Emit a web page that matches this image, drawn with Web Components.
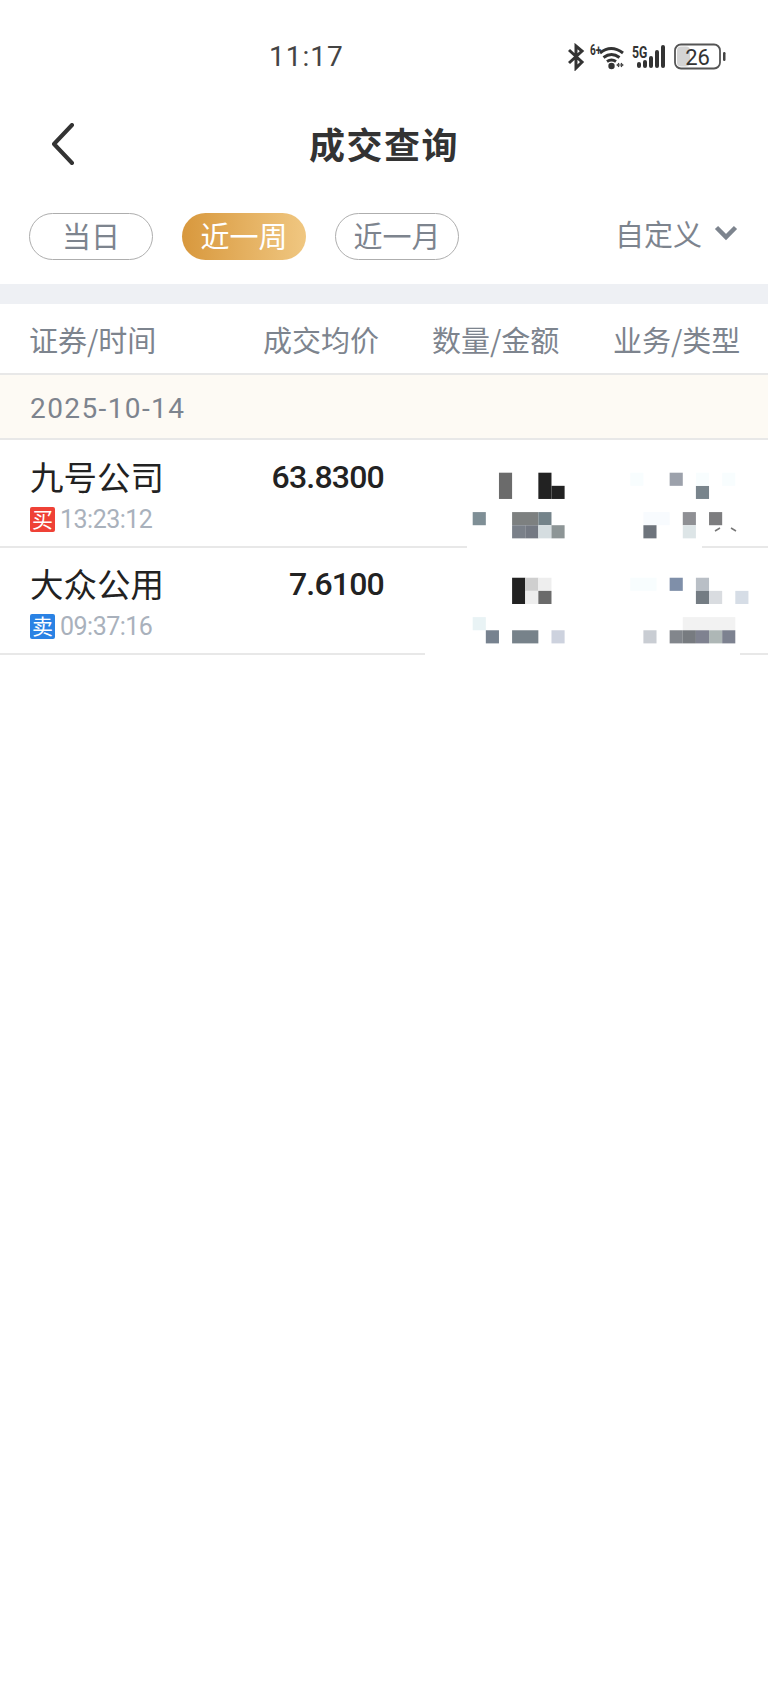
<!DOCTYPE html>
<html lang="zh">
<head>
<meta charset="utf-8">
<title>成交查询</title>
<style>
    html, body { margin: 0; background: #fff; }
    body { width: 768px; height: 1690px; overflow: hidden; font-family: "Noto Sans CJK SC", Roboto, sans-serif; }
</style>
</head>
<body>
<status-bar></status-bar>
<nav-bar>成交查询</nav-bar>
<filter-bar>
    <filter-pill>当日</filter-pill>
    <filter-pill active>近一周</filter-pill>
    <filter-pill>近一月</filter-pill>
</filter-bar>
<trade-table>
    <date-row>2025-10-14</date-row>
    <trade-row name="九号公司" side="买" time="13:23:12" price="63.8300"></trade-row>
    <trade-row name="大众公用" side="卖" time="09:37:16" price="7.6100"></trade-row>
</trade-table>

<script>
    class StatusBar extends HTMLElement {
        constructor() {
            super()
            this.attachShadow({ mode: 'open' }).innerHTML = `
                <style>
                    :host { display: flex; box-sizing: border-box; height: 100px; padding: 41px 40px 0 269px; justify-content: space-between; align-items: flex-start; color: #444; }
                    .time { font: 400 28px/32px Roboto, sans-serif; letter-spacing: 1px; }
                    svg { display: block; margin-top: 2px; }
                    text { font-family: Roboto, sans-serif; fill: #333; }
                </style>
                <div class="time">11:17</div>
                <svg width="160" height="28" viewBox="0 0 160 28">
                    <path d="M1 7l13 12-6 6V3l6 5L1 20" fill="none" stroke="#333" stroke-width="3"/>
                    <text transform="translate(22 12) scale(.72 1)" font-size="14" font-weight="700">6+</text>
                    <path d="M32 10q11-9 23 0M35.500 14.500q8-6 16 0M39 18.500q4.500-3 9 0" fill="none" stroke="#333" stroke-width="3"/>
                    <circle cx="43.500" cy="23" r="3.200" fill="#333"/>
                    <path d="M48.500 22h7M51 20l-1.500 2 1.500 2M53 20l1.500 2-1.500 2" fill="none" stroke="#333" stroke-width="1.200"/>
                    <text transform="translate(64 15) scale(.72 1)" font-size="17" font-weight="700">5G</text>
                    <rect x="69" y="19" width="4" height="6" rx="2" fill="#333"/>
                    <rect x="75" y="17" width="4" height="8" rx="2" fill="#333"/>
                    <rect x="81" y="13" width="4" height="12" rx="2" fill="#333"/>
                    <rect x="87" y="7" width="4" height="18" rx="2" fill="#333"/>
                    <rect x="93" y="2" width="4" height="23" rx="2" fill="#333"/>
                    <rect x="107" y="1.500" width="45" height="24" rx="6" fill="#fff" stroke="#555" stroke-width="1.800"/>
                    <rect x="109" y="3.500" width="13" height="20" rx="4" fill="#d4d4d4"/>
                    <text x="129.500" y="21.500" font-size="22" text-anchor="middle">26</text>
                    <rect x="155" y="9" width="2.500" height="9" rx="1.200" fill="#444"/>
                </svg>
            `
        }
    }
    customElements.define('status-bar', StatusBar)

    class NavBar extends HTMLElement {
        constructor() {
            super()
            this.attachShadow({ mode: 'open' }).innerHTML = `
                <style>
                    :host { display: flex; position: relative; height: 90px; align-items: flex-start; justify-content: center; color: #333; }
                    .back { position: absolute; left: 50px; top: 23px; }
                    .title { font-size: 36px; line-height: 52px; font-weight: 700; margin-top: 17px; letter-spacing: 1.500px; }
                </style>
                <svg class="back" width="26" height="42" viewBox="0 0 26 42"><path d="M22 2L4 21l18 19" fill="none" stroke="#333" stroke-width="4" stroke-linecap="round" stroke-linejoin="round"/></svg>
                <div class="title"><slot></slot></div>
            `
        }
    }
    customElements.define('nav-bar', NavBar)

    class FilterPill extends HTMLElement {
        constructor() {
            super()
            this.attachShadow({ mode: 'open' }).innerHTML = `
                <style>
                    :host { display: flex; box-sizing: border-box; width: 124px; height: 47px; padding-bottom: 2px; align-items: center; justify-content: center; border-radius: 24px; border: 1px solid #aeaeae; color: #7d848e; font-size: 29px; line-height: 1; background: #fff; }
                    :host([active]) { border: 0; color: #fff; background: linear-gradient(90deg, #d8983d, #f0c781); }
                </style>
                <slot></slot>
            `
        }
    }
    customElements.define('filter-pill', FilterPill)

    class FilterBar extends HTMLElement {
        constructor() {
            super()
            this.attachShadow({ mode: 'open' }).innerHTML = `
                <style>
                    :host { display: flex; box-sizing: border-box; height: 94px; padding: 23px 30px 0 29px; gap: 29px; align-items: flex-start; }
                    .custom { margin-left: auto; display: flex; align-items: center; gap: 12px; height: 39px; color: #7d848e; font-size: 29px; }
                    svg { display: block; }
                </style>
                <slot></slot>
                <div class="custom">自定义
                    <svg width="24" height="16" viewBox="0 0 24 16"><path d="M2.500 2.500L12 12l9.500-9.500" fill="none" stroke="#7d848e" stroke-width="4.500"/></svg>
                </div>
            `
        }
    }
    customElements.define('filter-bar', FilterBar)

    class DateRow extends HTMLElement {
        constructor() {
            super()
            this.attachShadow({ mode: 'open' }).innerHTML = `
                <style>
                    :host { display: flex; box-sizing: border-box; height: 65px; padding: 4px 30px 0; align-items: center; background: #fdfaf4; border-bottom: 2px solid #e8e8e8; color: #7d848e; font: 400 28px Roboto, sans-serif; letter-spacing: 1.400px; }
                </style>
                <slot></slot>
            `
        }
    }
    customElements.define('date-row', DateRow)

    class TradeRow extends HTMLElement {
        constructor() {
            super()
            const side = this.getAttribute('side')
            this.attachShadow({ mode: 'open' }).innerHTML = `
                <style>
                    :host { display: block; box-sizing: border-box; width: 384px; height: 107px; padding: 14px 0 0 30px; }
                    .top { display: flex; justify-content: space-between; }
                    .name { font-size: 33.500px; line-height: 44px; color: #222; }
                    .price { font: 500 32px/44px Roboto, sans-serif; letter-spacing: -.8px; color: #222; margin-top: 1px; }
                    .meta { display: flex; align-items: center; gap: 5px; margin-top: 8px; height: 25px; }
                    .tag { width: 25px; height: 25px; border-radius: 2px; color: #fff; font-size: 21px; line-height: 22px; text-align: center; background: ${side == '买' ? '#ef4136' : '#2a82e4'}; }
                    .time { font: 400 25px/25px Roboto, sans-serif; letter-spacing: -.5px; color: #a9b1bc; }
                </style>
                <div class="top">
                    <div class="name">${this.getAttribute('name')}</div>
                    <div class="price">${this.getAttribute('price')}</div>
                </div>
                <div class="meta">
                    <div class="tag">${side}</div>
                    <div class="time">${this.getAttribute('time')}</div>
                </div>
            `
        }
    }
    customElements.define('trade-row', TradeRow)

    // blocks of the privacy mosaic: [col, row, width, height, colour]
    const BLOCKS = [
        [2, 0, 1, 2, '#6b6b6b'], [5, 0, 1, 2, '#222'], [6, 1, 1, 1, '#222'],
        [0, 3, 1, 1, '#7f8f96'], [3, 3, 2, 1, '#7d8080'], [5, 3, 1, 1, '#74838a'],
        [3, 4, 1, 1, '#7a8089'], [4, 4, 1, 1, '#747983'], [5, 4, 1, 1, '#d5dde0'], [6, 4, 1, 1, '#8d9596'],
        [15, 0, 1, 1, '#9ca1ab'], [17, 1, 1, 1, '#78848c'], [17, 0, 1, 1, '#f8fdfe'], [12, 0, 1, 1, '#f8fdfe'], [19, 0, 1, 1, '#f8fdfe'],
        [13, 3, 2, 1, '#f8fbfe'], [16, 3, 1, 1, '#8f9094'], [18, 3, 1, 1, '#7d7d7f'],
        [13, 4, 1, 1, '#6e747c'], [16, 4, 1, 1, '#dde5e7'],
        [3, 8, 1, 2, '#222'], [4, 8, 1, 1, '#cfcfcf'], [5, 8, 1, 1, '#eee'], [4, 9, 1, 1, '#eee'], [5, 9, 1, 1, '#6b6b6b'],
        [0, 11, 1, 1, '#e9f3f5'], [1, 12, 1, 1, '#77828f'], [3, 12, 2, 1, '#77828a'], [6, 12, 1, 1, '#cdd2de'],
        [12, 8, 2, 1, '#f8fdfe'], [15, 8, 1, 1, '#7f8fa9'], [17, 8, 1, 1, '#b9bfc6'], [17, 9, 1, 1, '#747c83'],
        [18, 9, 1, 1, '#d9dce0'], [20, 9, 1, 1, '#d6dde6'],
        [16, 11, 4, 1, '#f2f2f2'], [13, 12, 1, 1, '#c9cdd3'], [15, 12, 1, 1, '#82868c'], [16, 12, 1, 1, '#777b80'],
        [17, 12, 1, 1, '#7f8290'], [18, 12, 1, 1, '#aeb7b6'], [19, 12, 1, 1, '#7d8290']
    ]

    class MosaicPatch extends HTMLElement {
        constructor() {
            super()
            const step = 13.13
            const rects = BLOCKS.map(b => `<rect x="${472.7 + b[0] * step}" y="${32.7 + b[1] * step}" width="${b[2] * step}" height="${b[3] * step}" fill="${b[4]}"/>`).join('')
            this.attachShadow({ mode: 'open' }).innerHTML = `
                <style>
                    :host { display: block; position: absolute; left: 0; top: 65px; width: 768px; height: 216px; pointer-events: none; }
                    svg { display: block; }
                    .rule { fill: #e8e8e8; }
                </style>
                <svg width="768" height="216" viewBox="0 0 768 216">
                    <rect class="rule" x="0" y="106" width="467" height="2"/>
                    <rect class="rule" x="702" y="106" width="66" height="2"/>
                    <rect class="rule" x="0" y="213" width="425" height="2"/>
                    <rect class="rule" x="740" y="213" width="28" height="2"/>
                    ${rects}
                    <path d="M715 91l5-3M731 88l5 3" fill="none" stroke="#777" stroke-width="1.500"/>
                </svg>
            `
        }
    }
    customElements.define('mosaic-patch', MosaicPatch)

    class TradeTable extends HTMLElement {
        constructor() {
            super()
            this.attachShadow({ mode: 'open' }).innerHTML = `
                <style>
                    :host { display: block; }
                    .band { height: 20px; background: #eef0f4; }
                    .head { display: grid; box-sizing: border-box; height: 71px; padding-left: 29px; grid-template-columns: 234px 169px 181px 1fr; align-items: center; color: #7d848e; font-size: 29px; border-bottom: 2px solid #e8e8e8; }
                    .list { position: relative; }
                </style>
                <div class="band"></div>
                <div class="head"><span>证券/时间</span><span>成交均价</span><span>数量/金额</span><span>业务/类型</span></div>
                <div class="list">
                    <slot></slot>
                </div>
            `
            this.shadowRoot.querySelector('.list').appendChild(document.createElement('mosaic-patch'))
        }
    }
    customElements.define('trade-table', TradeTable)
</script>
</body>
</html>
